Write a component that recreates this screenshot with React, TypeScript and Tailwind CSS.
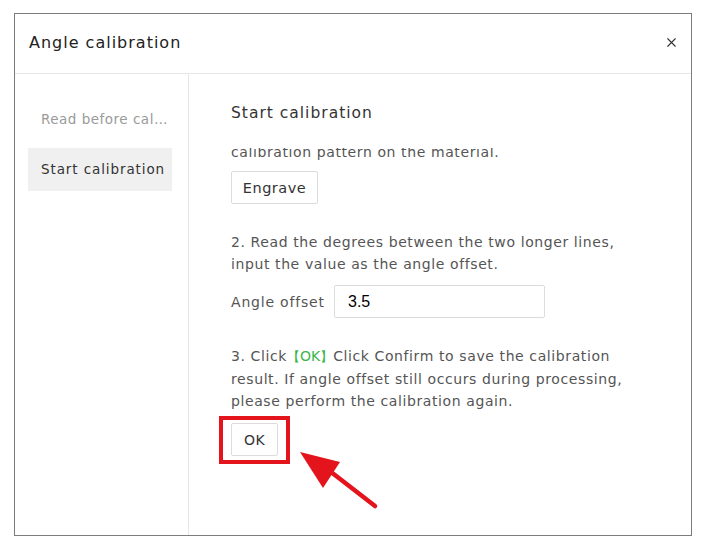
import { X } from "lucide-react";

const font = { fontFamily: '"DejaVu Sans", "Open Sans", sans-serif' };

export default function App() {
  return (
    <div className="relative w-[712px] h-[547px] bg-white pt-[13px] pl-[14px]" style={font}>
      <div className="w-[678px] h-[523px] border border-[#7c7c7c] flex flex-col">
        {/* header */}
        <div className="h-[60px] shrink-0 border-b border-[#e8e8e8] flex items-center justify-between pl-[14px] pr-[12px] pb-[2px]">
          <div className="text-[16px] text-[#222] tracking-[1px]">Angle calibration</div>
          <X size={15} strokeWidth={1.8} className="text-[#333]" />
        </div>

        {/* body */}
        <div className="flex flex-1 min-h-0">
          <div className="w-[174px] shrink-0 border-r border-[#e6e6e6] pt-[24px] pl-[13px] pr-[16px] flex flex-col gap-[7px]">
            <div className="h-[43px] flex items-center pl-[13px] pr-[1px] text-[13.5px] tracking-[0.5px] text-[#9a9a9a]">
              <span className="truncate">Read before calibration</span>
            </div>
            <div className="h-[43px] flex items-center pl-[13px] text-[13.5px] tracking-[0.9px] text-[#333] bg-[#f0f0f0] whitespace-nowrap">
              Start calibration
            </div>
          </div>

          <div className="flex-1 pl-[42px] pr-[10px] pt-[28px] flex flex-col min-h-0">
            <div className="text-[15.5px] leading-[22px] tracking-[1px] text-[#333]">Start calibration</div>
            <div className="mt-[24px] flex-1 overflow-hidden -ml-[16px] pl-[16px]">
              <div className="-mt-[29px] text-[14px] leading-[22px] tracking-[0.6px] text-[#555]">
                <p className="whitespace-nowrap">1. Click 【Engrave】 to engrave the</p>
                <p className="whitespace-nowrap">calibration pattern on the material.</p>
                <button className="mt-[8px] h-[33px] w-[87px] border border-[#dcdcdc] rounded-[2px] text-[14.5px] tracking-[0.5px] text-[#333] bg-white">
                  Engrave
                </button>

                <p className="mt-[27px] whitespace-nowrap">
                  2. Read the degrees between the two longer lines,
                  <br />
                  input the value as the angle offset.
                </p>
                <div className="mt-[10px] flex items-center">
                  <span className="w-[103px] text-[14px] tracking-[0.8px] text-[#555] whitespace-nowrap">Angle offset</span>
                  <div className="h-[33px] w-[211px] border border-[#dcdcdc] rounded-[2px] flex items-center pl-[13px] text-[16px] tracking-normal text-black" style={{ fontFamily: '"Liberation Sans", Arial, sans-serif' }}>
                    3.5
                  </div>
                </div>

                <p className="mt-[27px] whitespace-nowrap">
                  3. Click<span className="text-[#3bb54a] tracking-normal">
                    <span className="text-[13px]">【</span>OK<span className="text-[13px]">】</span>
                  </span>Click Confirm to save the calibration
                  <br />
                  result. If angle offset still occurs during processing,
                  <br />
                  please perform the calibration again.
                </p>
                <div className="relative mt-[11px] w-[47px]">
                  <button className="h-[33px] w-[47px] border border-[#dcdcdc] rounded-[2px] text-[14px] tracking-[0.5px] text-[#333] bg-white">
                    OK
                  </button>
                  <div className="absolute -left-[12px] -top-[7px] w-[71px] h-[48px] border-[4px] border-[#e3141b]" />
                </div>
              </div>
            </div>
          </div>
        </div>
      </div>

      {/* annotation arrow */}
      <svg className="absolute left-0 top-0 pointer-events-none" width="712" height="547">
        <line x1="375" y1="506" x2="322" y2="465" stroke="#e3141b" strokeWidth="4.5" strokeLinecap="round" />
        <polygon points="300,452 340,462 323,488" fill="#e3141b" />
      </svg>
    </div>
  );
}
